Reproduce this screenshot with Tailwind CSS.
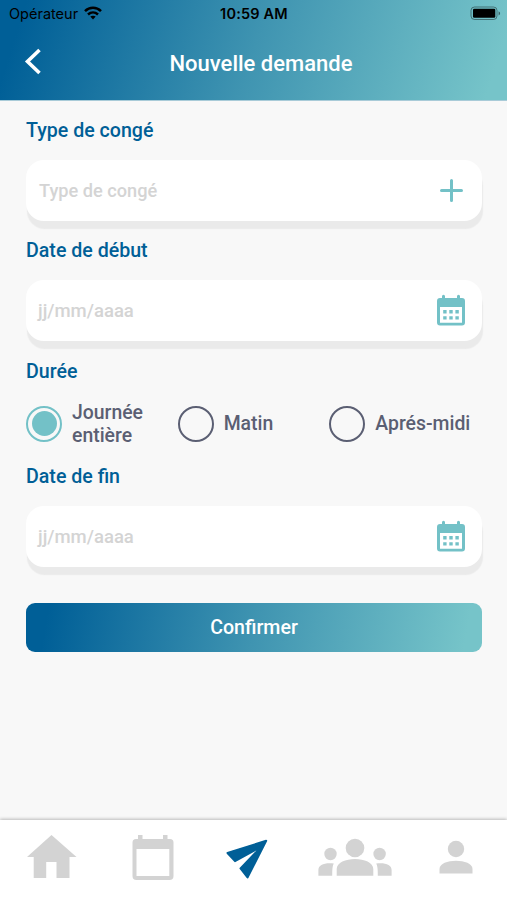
<!DOCTYPE html>
<html lang="fr">
<head>
<meta charset="utf-8">
<title>Nouvelle demande</title>
<script src="https://cdn.jsdelivr.net/npm/@tailwindcss/browser@4"></script>
</head>
<body class="w-[507px] h-[900px] flex flex-col overflow-hidden bg-[#f8f8f8] font-[Roboto,sans-serif] font-medium">
<svg width="0" height="0" class="hidden">
  <symbol id="calendar" viewBox="0 0 28 32">
    <path fill="#73c1c7" fill-rule="evenodd" d="M5 4V2.200a1.500 1.500 0 0 1 3 0V4H20V2.200a1.500 1.500 0 0 1 3 0V4H25a3 3 0 0 1 3 3v21.500a3 3 0 0 1-3 3H3a3 3 0 0 1-3-3V7a3 3 0 0 1 3-3ZM3 13V28.700H25V13Z"/>
    <path fill="#73c1c7" d="M6.200 16h3.400v3.400H6.200zM12.300 16h3.400v3.400h-3.400zM18.400 16h3.400v3.400h-3.400zM6.200 22.200h3.400v3.400H6.200zM12.300 22.200h3.400v3.400h-3.400zM18.400 22.200h3.400v3.400h-3.400z"/>
  </symbol>
</svg>

<header class="h-[100px] shrink-0 bg-[linear-gradient(108deg,#005f97_5%,#3f94b1_50%,#76c4c9_96%)] shadow-[0_1px_0_#a9cbd8]">
  <div class="h-7 grid grid-cols-3 items-center pl-[9px] pr-[6px] text-black font-[Inter,sans-serif] text-[14.500px]">
    <div class="flex items-center gap-[5px] font-normal"><span class="w-[70px] whitespace-nowrap">Opérateur</span>
      <svg class="-mt-[2px]" width="18" height="14" viewBox="0 0 18 14" fill="none" stroke="#000" stroke-width="2.500"><path d="M1 5.200C5.500.700 12.500.700 17 5.200M4 8.500C7 5.800 11 5.800 14 8.500"/><path d="m9 13.500-2.700-2.900c1.600-1.300 3.800-1.300 5.400 0Z" fill="#000" stroke="none"/></svg>
    </div>
    <div class="text-center font-semibold tracking-[0.200px] whitespace-nowrap -ml-[2px]">10:59 AM</div>
    <svg class="justify-self-end -mt-[2px]" width="31" height="15" viewBox="0 0 31 15"><rect x="1" y="1" width="26" height="12.500" rx="3.500" fill="none" stroke="#000" stroke-opacity=".4"/><rect x="3" y="2.800" width="22.300" height="8.900" rx="1.300"/><path d="M28.600 5.200c2 .8 2 3.400 0 4.200Z" opacity=".5"/></svg>
  </div>
  <div class="h-[72px] grid grid-cols-[60px_1fr_45px] items-center">
    <svg class="ml-6 -mt-[6px]" width="18" height="28" viewBox="0 0 18 28" fill="none" stroke="#fff" stroke-width="3.600"><path d="M15.500 3 3.500 14.500l12 11.500"/></svg>
    <h1 class="text-center text-white text-[22px] leading-[26px] font-medium">Nouvelle demande</h1>
  </div>
</header>

<main class="flex-1 pl-[26px] pr-[25px] pt-[19px] text-[19.600px] leading-6 text-[#005f97]">
  <h2>Type de congé</h2>
  <div class="mt-[17px] h-[61px] rounded-[18px] bg-white shadow-[1px_8px_1px_#eaeaea] flex items-center justify-between pl-[13px] pr-[19px]">
    <span class="text-[18.200px] text-[#d4d4d4]">Type de congé</span>
    <svg width="23" height="23" viewBox="0 0 23 23" stroke="#73c1c7" stroke-width="3" stroke-linecap="round"><path d="M11.500 1.500v20M1.500 11.500h20"/></svg>
  </div>
  <h2 class="mt-[18px]">Date de début</h2>
  <div class="mt-[17px] h-[61px] rounded-[18px] bg-white shadow-[1px_8px_1px_#eaeaea] flex items-center justify-between pl-[12px] pr-[17px]">
    <span class="text-[18.500px] text-[#d4d4d4]">jj/mm/aaaa</span>
    <svg class="-mt-[2px]" width="28" height="32"><use href="#calendar"/></svg>
  </div>
  <h2 class="mt-[19px]">Durée</h2>
  <div class="mt-[16px] -mr-[-1px] h-[47px] grid grid-cols-3 items-center text-[19.400px] text-[#5b5f73] leading-[23px]">
    <div class="flex items-center gap-[10px]"><span class="size-9 shrink-0 rounded-full border-2 border-[#73c1c7] grid place-items-center"><span class="size-[25px] rounded-full bg-[#73c1c7]"></span></span><span>Journée<br>entière</span></div>
    <div class="flex items-center gap-[10px]"><span class="size-9 shrink-0 rounded-full border-2 border-[#5b5f73]"></span><span>Matin</span></div>
    <div class="flex items-center gap-[10px]"><span class="size-9 shrink-0 rounded-full border-2 border-[#5b5f73]"></span><span>Aprés-midi</span></div>
  </div>
  <h2 class="mt-[18px]">Date de fin</h2>
  <div class="mt-[17px] h-[61px] rounded-[18px] bg-white shadow-[1px_8px_1px_#eaeaea] flex items-center justify-between pl-[12px] pr-[17px]">
    <span class="text-[18.500px] text-[#d4d4d4]">jj/mm/aaaa</span>
    <svg class="-mt-[2px]" width="28" height="32"><use href="#calendar"/></svg>
  </div>
  <button class="mt-[36px] w-full h-[49px] pt-px rounded-[9px] text-white text-[19.600px] font-medium bg-[linear-gradient(100deg,#005f97_5%,#3f94b1_50%,#76c4c9_96%)]">Confirmer</button>
</main>

<nav class="h-[80px] shrink-0 bg-white shadow-[0_-1px_3px_rgba(0,0,0,0.25)] flex items-start pl-[27px] pt-[14px]">
  <svg class="shrink-0" width="50" height="44" viewBox="0 0 50 44" fill="#d3d3d3"><path d="M24.500 1 49.500 23h-7v21H29.500V28H19.200v16H6.700V23H0Z"/></svg>
  <svg class="shrink-0 ml-[55px]" width="42" height="46" viewBox="0 0 42 46" fill="#d3d3d3"><path fill-rule="evenodd" d="M6 5V1h4.500v4H31V1h4.500v4H38a3.500 3.500 0 0 1 3.500 3.500V42a4 4 0 0 1-4 4H4.500a4 4 0 0 1-4-4V8.500A3.500 3.500 0 0 1 4 5ZM4.500 15V42H37.300V15Z"/></svg>
  <svg class="shrink-0 ml-[52px] mt-[4px]" width="43" height="42" viewBox="0 0 43 42" fill="#005f97" stroke="#005f97" stroke-width="2" stroke-linejoin="round"><path d="M40.200 2.800 1.500 15l7.500 8.200L35.500 8.500 14.500 30.500l7 9Z"/></svg>
  <svg class="shrink-0 ml-[49px] mt-[4px]" width="74" height="38" viewBox="0 0 74 38" fill="#d3d3d3"><circle cx="37" cy="10" r="9.300"/><circle cx="12.500" cy="16" r="6.200"/><circle cx="61.600" cy="16" r="6.200"/><path d="M18.700 37.800V31C18.700 17.500 55.300 17.500 55.300 31v6.800ZM.4 37.800V32C.4 27 6.500 24.500 15.800 25.600Q14 28.500 14.200 37.800ZM73.600 37.800V32c0-5-6.100-7.500-15.400-6.400q1.800 2.900 1.600 12.200Z"/></svg>
  <svg class="shrink-0 ml-[47px] mt-[6px]" width="34" height="34" viewBox="0 0 34 34" fill="#d3d3d3"><circle cx="17" cy="9" r="8.200"/><path d="M.5 33.500V29c0-11 33-11 33 0v4.500Z"/></svg>
</nav>
</body>
</html>
